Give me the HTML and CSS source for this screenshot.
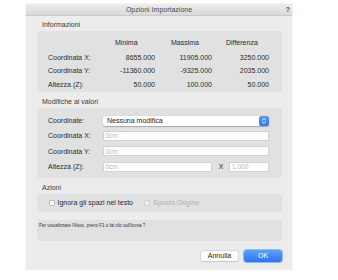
FILE: index.html
```html
<!DOCTYPE html>
<html>
<head>
<meta charset="utf-8">
<link rel="stylesheet" href="styles.css">
</head>
<body>
<div class="dialog">
  <div class="titlebar">
    <span class="title">Opzioni Importazione</span>
    <span class="help">?</span>
  </div>
  <div class="content">
    <div class="section-label first">Informazioni</div>
    <div class="panel info">
      <span></span>
      <span class="hdr h1">Minima</span>
      <span class="hdr h2">Massima</span>
      <span class="hdr h3">Differenza</span>
      <span class="lbl">Coordinata X:</span>
      <span class="num">8655.000</span>
      <span class="num">11905.000</span>
      <span class="num">3250.000</span>
      <span class="lbl">Coordinata Y:</span>
      <span class="num">-11360.000</span>
      <span class="num">-9325.000</span>
      <span class="num">2035.000</span>
      <span class="lbl">Altezza (Z):</span>
      <span class="num">50.000</span>
      <span class="num">100.000</span>
      <span class="num">50.000</span>
    </div>

    <div class="section-label">Modifiche ai valori</div>
    <div class="panel edits">
      <span class="lbl">Coordinate:</span>
      <div class="select">
        <span class="select-text">Nessuna modifica</span>
        <span class="stepper">
          <svg width="6" height="8" viewBox="0 0 6 8"><path d="M1.2 3.2 L3 1.6 L4.8 3.2 M1.2 4.8 L3 6.4 L4.8 4.8" fill="none" stroke="#fff" stroke-width="0.9"/></svg>
        </span>
      </div>
      <span class="lbl">Coordinata X:</span>
      <div class="field"><span class="ph">0cm</span></div>
      <span class="lbl">Coordinata Y:</span>
      <div class="field"><span class="ph">0cm</span></div>
      <span class="lbl">Altezza (Z):</span>
      <div class="zrow">
        <div class="field grow"><span class="ph">0cm</span></div>
        <span class="xlbl">X</span>
        <div class="field scale"><span class="ph">1,000</span></div>
      </div>
    </div>

    <div class="section-label">Azioni</div>
    <div class="panel actions">
      <label class="check"><span class="box"></span><span>Ignora gli spazi nel testo</span></label>
      <label class="check disabled"><span class="box"></span><span>Sposta Origine</span></label>
    </div>

    <div class="panel helpbox">Per visualizzare l'Aiuto, premi F1 o fai clic sull'icona ?</div>

    <div class="buttons">
      <button class="btn cancel">Annulla</button>
      <button class="btn ok">OK</button>
    </div>
  </div>
</div>
</body>
</html>
```

FILE: styles.css
```css
* { box-sizing: border-box; }
html, body { margin: 0; padding: 0; background: #ffffff; }
body {
  font-family: "Liberation Sans", Arial, sans-serif;
  font-size: 7px;
  color: #2a2a2a;
  padding: 4px 0 0 26px;
}
.dialog {
  width: 266px;
  height: 266px;
  background: #ececec;
  box-shadow: 0 0 0 0.5px rgba(0,0,0,0.08);
  display: flex;
  flex-direction: column;
}
.titlebar {
  height: 12px;
  background: linear-gradient(#ececec, #d9d9d9);
  border-bottom: 1px solid #c9c9c9;
  display: flex;
  align-items: center;
  justify-content: center;
  position: relative;
  border-radius: 3px 3px 0 0;
}
.title { font-size: 7px; color: #4a4a4a; line-height: 12px; }
.help {
  position: absolute;
  right: 2px;
  top: 1px;
  font-size: 7px;
  font-weight: bold;
  color: #555;
  line-height: 10px;
}
.content {
  padding: 5px 10px 0 11px;
  display: flex;
  flex-direction: column;
}
.section-label {
  line-height: 8px;
  height: 8px;
  margin: 6.5px 0 1.5px 5px;
  color: #3a3a3a;
}
.section-label.first { margin-top: 0; }
.panel {
  background: #e1e1e1;
  border-radius: 3px;
}
.info {
  height: 61px;
  padding: 5px 0 0 11px;
  display: grid;
  grid-template-columns: 52px 57px 57px 57px;
  grid-template-rows: 14.5px 14px 13.5px 13.5px;
  align-items: center;
}
.hdr { padding-left: 15px; }
.h2 { padding-left: 14px; }
.h3 { padding-left: 12px; }
.num { text-align: right; padding-right: 2px; }
.lbl { white-space: nowrap; }
.edits {
  height: 70px;
  padding: 8px 13.5px 0 11px;
  display: grid;
  grid-template-columns: 54.5px 1fr;
  grid-auto-rows: 10px;
  row-gap: 5.4px;
  align-items: center;
}
.select {
  height: 10px;
  background: #ffffff;
  border-radius: 2px;
  box-shadow: 0 0.5px 1px rgba(0,0,0,0.25);
  display: flex;
  align-items: center;
  justify-content: space-between;
  padding-left: 4.5px;
}
.select-text { color: #1e1e1e; }
.stepper {
  width: 9.5px;
  height: 10px;
  background: linear-gradient(#5b9cf8, #2f74ee);
  border-radius: 2px;
  display: flex;
  align-items: center;
  justify-content: center;
}
.stepper svg { display: block; }
.field {
  height: 10px;
  background: #ffffff;
  border: 0.5px solid #d2d2d2;
  display: flex;
  align-items: center;
  padding-left: 2px;
}
.ph { color: #b8b8b8; font-size: 6.5px; }
.zrow {
  display: flex;
  align-items: center;
  height: 10px;
}
.field.grow { width: 109.5px; }
.xlbl { width: 17px; text-align: center; padding-left: 1px; }
.field.scale { flex: 1; }
.actions {
  height: 18px;
  display: flex;
  align-items: center;
  padding-left: 11.5px;
  gap: 11px;
}
.check { display: flex; align-items: center; gap: 3px; }
.box {
  width: 6px;
  height: 6px;
  background: #fff;
  border: 0.5px solid #bdbdbd;
  border-radius: 1px;
}
.check.disabled { color: #b0b0b0; }
.check.disabled .box { background: #ececec; border-color: #d0d0d0; }
.helpbox {
  margin-top: 8px;
  height: 21px;
  font-size: 4.5px;
  padding: 3px 2px;
  line-height: 6px;
  color: #333;
}
.buttons {
  display: flex;
  justify-content: flex-end;
  align-items: center;
  gap: 6px;
  margin-top: 9px;
  padding-right: 0;
}
.btn {
  font-family: "Liberation Sans", Arial, sans-serif;
  font-size: 7px;
  padding: 0;
  border: none;
}
.cancel {
  width: 37px;
  height: 9.5px;
  background: #fff;
  border-radius: 2px;
  box-shadow: 0 0 0 0.5px #c6c6c6, 0 0.5px 1px rgba(0,0,0,0.15);
  color: #222;
  line-height: 9.5px;
}
.ok {
  width: 38px;
  height: 12.5px;
  background: linear-gradient(#5fa2fa, #2c72ee);
  border-radius: 3px;
  color: #fff;
  box-shadow: 0 0 0 1px #8bb8f7;
  line-height: 12.5px;
}
```
